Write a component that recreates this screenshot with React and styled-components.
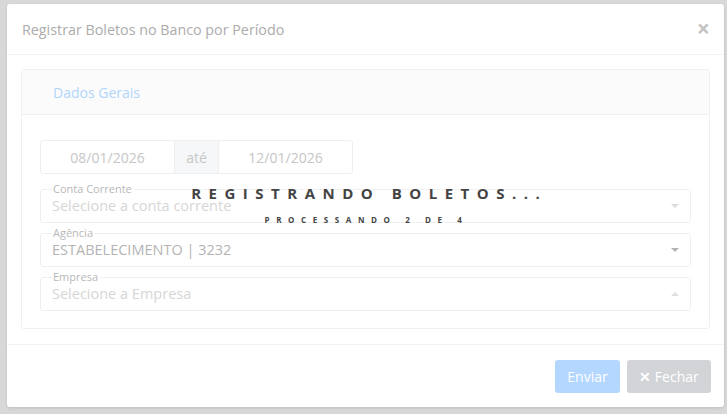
import React from 'react';
import styled, { createGlobalStyle } from 'styled-components';

const GlobalStyle = createGlobalStyle`
  * { box-sizing: border-box; }
  html, body {
    margin: 0;
    padding: 0;
    background: #d8d8d8;
    font-family: 'Open Sans', 'Noto Sans', sans-serif;
  }
`;

const fields = [
  { label: 'Conta Corrente', value: 'Selecione a conta corrente', placeholder: true, caret: 'down' },
  { label: 'Agência', value: 'ESTABELECIMENTO | 3232', placeholder: false, caret: 'down' },
  { label: 'Empresa', value: 'Selecione a Empresa', placeholder: true, caret: 'up' },
];

const App = () => {
  return (
    <>
      <GlobalStyle />
      <Page>
        <Modal>
          <Header>
            <Title>Registrar Boletos no Banco por Período</Title>
            <CloseButton>×</CloseButton>
          </Header>
          <Body>
            <Card>
              <CardHeader>
                <TabLabel>Dados Gerais</TabLabel>
              </CardHeader>
              <CardBody>
                <DateGroup>
                  <DateInput>08/01/2026</DateInput>
                  <Addon>até</Addon>
                  <DateInput>12/01/2026</DateInput>
                </DateGroup>
                {fields.map((f) => (
                  <Field key={f.label}>
                    <Legend>{f.label}</Legend>
                    <SelectRow>
                      <SelectValue $placeholder={f.placeholder}>{f.value}</SelectValue>
                      <Caret $dir={f.caret} $placeholder={f.placeholder} />
                    </SelectRow>
                  </Field>
                ))}
              </CardBody>
            </Card>
          </Body>
          <Footer>
            <SendButton>Enviar</SendButton>
            <CloseFooterButton>
              <span>✕</span> Fechar
            </CloseFooterButton>
          </Footer>
          <Loading>
            <LoadingTitle>REGISTRANDO BOLETOS...</LoadingTitle>
            <LoadingSub>PROCESSANDO 2 DE 4</LoadingSub>
          </Loading>
        </Modal>
      </Page>
    </>
  );
};

export default App;

const Page = styled.div`
  width: 727px;
  height: 414px;
  padding: 4px 3px 0 7px;
`;

const Modal = styled.div`
  position: relative;
  width: 717px;
  height: 403px;
  background: #fff;
  border-radius: 3px;
  box-shadow: 0 1px 3px rgba(0, 0, 0, 0.12);
  display: flex;
  flex-direction: column;
`;

const Header = styled.div`
  height: 51px;
  display: flex;
  align-items: center;
  justify-content: space-between;
  padding: 0 14px 0 15px;
  border-bottom: 1px solid #f2f2f2;
`;

const Title = styled.h4`
  margin: 0;
  font-size: 14.3px;
  font-weight: 400;
  color: #acacac;
`;

const CloseButton = styled.span`
  font-size: 23px;
  font-weight: 700;
  color: #c4c4c4;
  line-height: 1;
  margin-top: -1px;
`;

const Body = styled.div`
  padding: 14px 14px 15px 14px;
  border-bottom: 1px solid #f2f2f2;
`;

const Card = styled.div`
  border: 1px solid #f0f0f0;
  border-radius: 3px;
`;

const CardHeader = styled.div`
  height: 45px;
  display: flex;
  align-items: center;
  padding-left: 31px;
  background: #fbfbfb;
  border-bottom: 1px solid #efefef;
`;

const TabLabel = styled.span`
  font-size: 14px;
  color: #b0d6fb;
`;

const CardBody = styled.div`
  padding: 25px 18px 17px 18px;
  display: flex;
  flex-direction: column;
  gap: 4px;
`;

const DateGroup = styled.div`
  display: flex;
  width: 313px;
  height: 34px;
  border: 1px solid #efefef;
  border-radius: 3px;
  margin-bottom: 5px;
`;

const DateInput = styled.div`
  flex: 1;
  display: flex;
  align-items: center;
  justify-content: center;
  font-size: 14px;
  color: #c6c6c6;
`;

const Addon = styled.div`
  width: 45px;
  display: flex;
  align-items: center;
  justify-content: center;
  background: #f6f7f9;
  border-left: 1px solid #efefef;
  border-right: 1px solid #efefef;
  font-size: 14px;
  color: #c6c6c6;
`;

const Field = styled.fieldset`
  margin: 0;
  padding: 0 11px 5px 11px;
  border: 1px solid #efefef;
  border-radius: 3px;
  min-width: 0;
`;

const Legend = styled.legend`
  padding: 0 2px 0 1px;
  font-size: 11px;
  line-height: 12px;
  color: #b8b8b8;
`;

const SelectRow = styled.div`
  display: flex;
  align-items: center;
  justify-content: space-between;
  height: 22px;
  padding-right: 0;
`;

const SelectValue = styled.span`
  font-size: 14.5px;
  line-height: 22px;
  color: ${({ $placeholder }) => ($placeholder ? '#d6d6d6' : '#b4b4b4')};
`;

const Caret = styled.span`
  width: 0;
  height: 0;
  border-left: 4px solid transparent;
  border-right: 4px solid transparent;
  ${({ $dir, $placeholder }) =>
    $dir === 'up'
      ? `border-bottom: 4px solid ${$placeholder ? '#e0e0e0' : '#b4b4b4'};`
      : `border-top: 4px solid ${$placeholder ? '#dcdcdc' : '#b4b4b4'};`}
`;

const Footer = styled.div`
  flex: 1;
  display: flex;
  justify-content: flex-end;
  align-items: flex-start;
  gap: 7px;
  padding: 15px 13px 0 0;
`;

const Btn = styled.button`
  height: 33px;
  border: none;
  border-radius: 3px;
  color: #fff;
  font-family: 'Open Sans', 'Noto Sans', sans-serif;
  font-size: 14px;
  padding: 0;
`;

const SendButton = styled(Btn)`
  width: 65px;
  background: #b3d7ff;
`;

const CloseFooterButton = styled(Btn)`
  width: 84px;
  background: #d2d4d7;

  span {
    font-weight: 700;
    font-size: 14px;
  }
`;

const Loading = styled.div`
  position: absolute;
  inset: 0;
  display: flex;
  flex-direction: column;
  align-items: center;
  justify-content: center;
  gap: 12px;
  padding-bottom: 4px;
  pointer-events: none;
`;

const LoadingTitle = styled.div`
  font-size: 15px;
  line-height: 20px;
  font-weight: 700;
  letter-spacing: 7.5px;
  margin-right: -7.5px;
  color: #444;
`;

const LoadingSub = styled.div`
  font-size: 8px;
  line-height: 10px;
  font-weight: 700;
  letter-spacing: 6.6px;
  margin-right: -2px;
  color: #444;
`;
